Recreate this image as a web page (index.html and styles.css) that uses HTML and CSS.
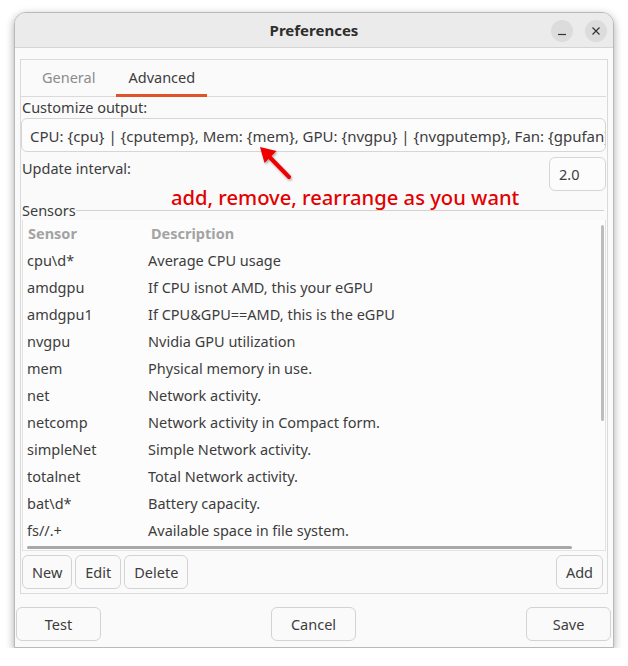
FILE: index.html
```html
<!DOCTYPE html>
<html lang="en">
<head>
<meta charset="utf-8"/>
<title>Preferences</title>
<link rel="stylesheet" href="styles.css">
</head>
<body>
<div class="window">
  <div class="titlebar">
    <div class="title">Preferences</div>
    <div class="controls">
      <span class="ctl">
        <svg width="22" height="22" viewBox="0 0 22 22"><line x1="7" y1="14.5" x2="15" y2="14.5" stroke="#333" stroke-width="1.2"/></svg>
      </span>
      <span class="ctl">
        <svg width="22" height="22" viewBox="0 0 22 22"><path d="M7.5 7.5 L14.5 14.5 M14.5 7.5 L7.5 14.5" stroke="#333" stroke-width="1.2" fill="none"/></svg>
      </span>
    </div>
  </div>

  <div class="content">
    <div class="notebook">
      <div class="tabs">
        <div class="tab">General</div>
        <div class="tab active">Advanced</div>
      </div>
      <div class="page">
        <div class="field-label">Customize output:</div>
        <div class="entry">CPU: {cpu} | {cputemp}, Mem: {mem}, GPU: {nvgpu} | {nvgputemp}, Fan: {gpufan}</div>

        <div class="interval-row">
          <div class="field-label interval-label">Update interval:</div>
          <div class="spin">2.0</div>
        </div>

        <div class="frame-head">
          <span class="frame-label">Sensors</span>
          <span class="frame-line"></span>
        </div>

        <div class="list">
          <div class="row head">
            <div class="c1">Sensor</div>
            <div class="c2">Description</div>
          </div>
          <div class="row"><div class="c1">cpu\d*</div><div class="c2">Average CPU usage</div></div>
          <div class="row"><div class="c1">amdgpu</div><div class="c2">If CPU isnot AMD, this your eGPU</div></div>
          <div class="row"><div class="c1">amdgpu1</div><div class="c2">If CPU&amp;GPU==AMD, this is the eGPU</div></div>
          <div class="row"><div class="c1">nvgpu</div><div class="c2">Nvidia GPU utilization</div></div>
          <div class="row"><div class="c1">mem</div><div class="c2">Physical memory in use.</div></div>
          <div class="row"><div class="c1">net</div><div class="c2">Network activity.</div></div>
          <div class="row"><div class="c1">netcomp</div><div class="c2">Network activity in Compact form.</div></div>
          <div class="row"><div class="c1">simpleNet</div><div class="c2">Simple Network activity.</div></div>
          <div class="row"><div class="c1">totalnet</div><div class="c2">Total Network activity.</div></div>
          <div class="row"><div class="c1">bat\d*</div><div class="c2">Battery capacity.</div></div>
          <div class="row"><div class="c1">fs//.+</div><div class="c2">Available space in file system.</div></div>
          <div class="vscroll"></div>
          <div class="hscroll"></div>
        </div>

        <div class="list-buttons">
          <div class="group">
            <button class="btn small">New</button>
            <button class="btn small">Edit</button>
            <button class="btn small">Delete</button>
          </div>
          <button class="btn small">Add</button>
        </div>
      </div>
    </div>

    <div class="dialog-buttons">
      <button class="btn wide">Test</button>
      <button class="btn wide">Cancel</button>
      <button class="btn wide">Save</button>
    </div>
  </div>

  <!-- annotation drawn over the screenshot -->
  <div class="note">add, remove, rearrange as you want</div>
  <svg class="arrow" width="50" height="46" viewBox="250 140 50 46">
    <defs>
      <filter id="sh" x="-30%" y="-30%" width="160%" height="160%">
        <feDropShadow dx="1" dy="1.5" stdDeviation="1.2" flood-color="#000" flood-opacity="0.35"/>
      </filter>
    </defs>
    <g filter="url(#sh)" fill="#ee0000">
      <line x1="289" y1="177" x2="269" y2="156.5" stroke="#ee0000" stroke-width="4" stroke-linecap="round"/>
      <polygon points="260,147 276.5,151 264.5,163"/>
    </g>
  </svg>
</div>
</body>
</html>
```

FILE: styles.css
```css
body {
  margin: 0;
  padding: 12px 14px 0 14px;
  background: #ffffff;
  font-family: 'Noto Sans', 'Open Sans', sans-serif;
  font-size: 14.5px;
  color: #3d3d3d;
}

.window {
  position: relative;
  width: 600px;
  box-sizing: border-box;
  background: #fafafa;
  border: 1px solid #b9b9b9;
  border-radius: 12px 12px 0 0;
  box-shadow: 0 3px 9px rgba(0, 0, 0, 0.35);
}

.titlebar {
  height: 34px;
  display: flex;
  align-items: center;
  justify-content: center;
  position: relative;
  background: #ebebeb;
  border-bottom: 1px solid #d4d4d4;
  border-radius: 11px 11px 0 0;
}

.title {
  font-weight: bold;
  font-size: 15px;
  color: #2e2e2e;
}

.controls {
  position: absolute;
  right: 6px;
  top: 7px;
  display: flex;
  gap: 12px;
}

.ctl {
  width: 22px;
  height: 22px;
  border-radius: 50%;
  background: #dcdcdc;
  display: block;
}

.ctl svg {
  display: block;
}

.content {
  padding: 11px 5px 6px 5px;
}

.notebook {
  border: 1px solid #dadada;
  padding: 0 1px 4px 0;
}

.tabs {
  display: flex;
  gap: 9px;
  padding-left: 9px;
  height: 36px;
  border-bottom: 1px solid #dadada;
}

.tab {
  padding: 0 12px;
  line-height: 34px;
  color: #8c8c8c;
  border-bottom: 3px solid transparent;
  height: 34px;
  margin-bottom: -1px;
}

.tab.active {
  color: #3d3d3d;
  border-bottom-color: #e0532a;
}

.field-label {
  line-height: 20px;
  padding-left: 1px;
}

.entry {
  margin-top: 1px;
  height: 34px;
  line-height: 34px;
  box-sizing: border-box;
  border: 1px solid #d6d6d6;
  border-radius: 6px;
  background: #fcfcfc;
  padding: 0 8px;
  font-size: 15px;
  white-space: nowrap;
  overflow: hidden;
}

.interval-row {
  display: flex;
  justify-content: space-between;
  align-items: flex-start;
  margin-top: 5px;
}

.interval-label {
  margin-top: 1px;
}

.spin {
  width: 57px;
  height: 34px;
  box-sizing: border-box;
  border: 1px solid #d6d6d6;
  border-radius: 6px;
  background: #fcfcfc;
  line-height: 32px;
  padding-left: 9px;
}

.frame-head {
  display: flex;
  align-items: center;
  height: 20px;
  margin-top: 9px;
  padding-left: 1px;
  padding-right: 2px;
}

.frame-line {
  flex: 1;
  height: 1px;
  background: #d2d2d2;
}

.list {
  position: relative;
  margin-left: 1px;
  border: 1px solid #e3e3e3;
  border-top: none;
  background: #fcfcfc;
  padding-bottom: 7px;
}

.row {
  display: flex;
  height: 27px;
  align-items: center;
  padding-left: 4px;
}

.row.head {
  height: 26px;
  font-weight: bold;
  color: #a3a3a3;
}

.row.head .c1 {
  padding-left: 1px;
}

.row.head .c2 {
  padding-left: 2px;
}

.c1 {
  width: 121px;
}

.vscroll {
  position: absolute;
  right: 1px;
  top: 5px;
  width: 3px;
  height: 196px;
  border-radius: 2px;
  background: #bdbdbd;
}

.hscroll {
  position: absolute;
  left: 4px;
  bottom: 1px;
  width: 545px;
  height: 3px;
  border-radius: 2px;
  background: #a8a8a8;
}

.list-buttons {
  display: flex;
  justify-content: space-between;
  margin-top: 4px;
  padding-left: 1px;
  padding-right: 3px;
}

.group {
  display: flex;
  gap: 3px;
}

.btn {
  font-family: inherit;
  font-size: 14.5px;
  color: #3d3d3d;
  background: #fafafa;
  border: 1px solid #d3d3d3;
  border-radius: 6px;
  height: 34px;
  padding: 0;
}

.btn.small {
  padding: 0 9px;
}

.dialog-buttons {
  display: flex;
  justify-content: space-between;
  margin-top: 13px;
  margin-left: -4px;
  margin-right: -3px;
}

.btn.wide {
  width: 85px;
}

.note {
  position: absolute;
  left: 156px;
  top: 172px;
  line-height: 24px;
  font-size: 20.2px;
  font-weight: 500;
  color: #e30000;
  white-space: nowrap;
}

.arrow {
  position: absolute;
  left: 235px;
  top: 127px;
}
```
